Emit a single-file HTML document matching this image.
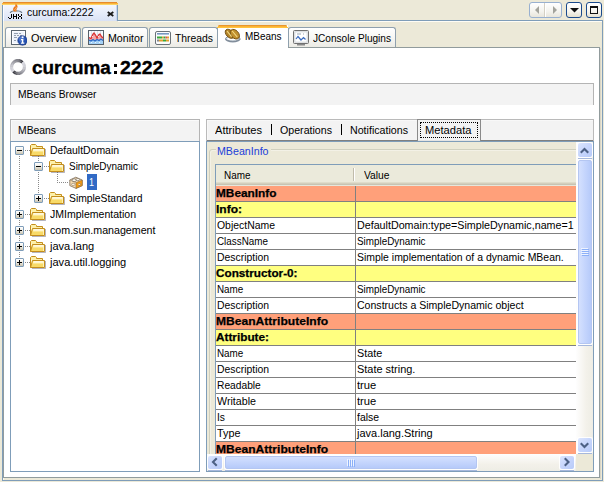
<!DOCTYPE html><html><head><meta charset="utf-8"><style>
html,body{margin:0;padding:0;width:604px;height:482px;overflow:hidden;background:#ece9d8}
body>div,#c>div{position:absolute}
.t{white-space:nowrap;line-height:13px;font-family:"Liberation Sans",sans-serif;transform-origin:0 0}
</style></head><body>
<div style="left:3px;top:5px;width:114px;height:16px;background:linear-gradient(#f4f7fd,#d9e2f5)"></div><div style="left:3px;top:5px;width:1px;height:16px;background:#fbfcff"></div><div style="left:3px;top:2px;width:114px;height:1px;background:#e68b2c"></div><div style="left:2px;top:3px;width:116px;height:1px;background:#f9b13a"></div><div style="left:2px;top:4px;width:116px;height:1px;background:#fdd566"></div><div style="left:2px;top:5px;width:1px;height:476px;background:#7f9db9"></div><div style="left:117px;top:5px;width:1px;height:16px;background:#7f9db9"></div><div style="left:117px;top:20px;width:486px;height:1px;background:#7f9db9"></div><div style="left:118px;top:21px;width:484px;height:1px;background:#fffdf5"></div><div style="left:602px;top:20px;width:1px;height:461px;background:#7f9db9"></div><div style="left:2px;top:480px;width:601px;height:1px;background:#7f9db9"></div><div style="left:3px;top:21px;width:1px;height:459px;background:#fbf8ea"></div><div style="left:4px;top:48px;width:595px;height:429px;background:#fff"></div><div style="left:3px;top:47px;width:1px;height:431px;background:#919b9c"></div><div style="left:3px;top:47px;width:597px;height:1px;background:#919b9c"></div><div style="left:599px;top:47px;width:1px;height:431px;background:#919b9c"></div><div style="left:3px;top:477px;width:597px;height:1px;background:#919b9c"></div><div style="left:600px;top:48px;width:1px;height:431px;background:#d8d5c6"></div><svg style="position:absolute;left:0;top:0" width="26" height="22" shape-rendering="crispEdges"><g shape-rendering="auto"><path d="M10.3 13 C10.8 10.2 21.2 10.2 21.7 13" fill="none" stroke="#6f7f8e" stroke-width="1.4"/><path d="M12.5 11.6 C14 10.9 18 10.9 19.5 11.6" fill="none" stroke="#c8d4de" stroke-width="0.8"/><path d="M15.5 3.6 C17.8 5 18.2 7 16.8 8.6 C16.2 9.6 16.6 10.4 16.6 11.4 L13.8 11.4 C12.6 9.8 13 8 14.4 6.8 C15.4 6 15.8 4.8 15.5 3.6Z" fill="#e8761a"/><path d="M15.6 6.6 C16.6 7.3 16.4 8.2 15.2 8.8 C14.4 9.3 14.8 10 15.6 10.3" fill="none" stroke="#ffc890" stroke-width="0.7"/></g><rect x="11" y="14" width="1" height="1" fill="#000"/><rect x="11" y="15" width="1" height="1" fill="#000"/><rect x="11" y="16" width="1" height="1" fill="#000"/><rect x="11" y="17" width="1" height="1" fill="#000"/><rect x="10" y="18" width="1" height="1" fill="#000"/><rect x="9" y="18" width="1" height="1" fill="#000"/><rect x="8" y="17" width="1" height="1" fill="#000"/><rect x="13" y="14" width="1" height="1" fill="#000"/><rect x="13" y="15" width="1" height="1" fill="#000"/><rect x="13" y="16" width="1" height="1" fill="#000"/><rect x="13" y="17" width="1" height="1" fill="#000"/><rect x="13" y="18" width="1" height="1" fill="#000"/><rect x="16" y="14" width="1" height="1" fill="#000"/><rect x="16" y="15" width="1" height="1" fill="#000"/><rect x="16" y="16" width="1" height="1" fill="#000"/><rect x="16" y="17" width="1" height="1" fill="#000"/><rect x="16" y="18" width="1" height="1" fill="#000"/><rect x="14" y="16" width="1" height="1" fill="#000"/><rect x="15" y="16" width="1" height="1" fill="#000"/><rect x="18" y="14" width="1" height="1" fill="#000"/><rect x="18" y="15" width="1" height="1" fill="#000"/><rect x="19" y="16" width="1" height="1" fill="#000"/><rect x="20" y="16" width="1" height="1" fill="#000"/><rect x="18" y="17" width="1" height="1" fill="#000"/><rect x="18" y="18" width="1" height="1" fill="#000"/><rect x="21" y="14" width="1" height="1" fill="#000"/><rect x="21" y="15" width="1" height="1" fill="#000"/><rect x="21" y="17" width="1" height="1" fill="#000"/><rect x="21" y="18" width="1" height="1" fill="#000"/></svg><div class="t" style="left:27.00px;top:6px;font-size:11px;color:#000;transform:scaleX(0.9543);">curcuma:2222</div><svg style="position:absolute;left:106px;top:10px" width="9" height="8" viewBox="0 0 9 8"><path d="M1.7 1.9L7.3 5.9M7.3 1.9L1.7 5.9" stroke="#1a1a1a" stroke-width="1.8"/></svg><div style="left:116px;top:5px;width:1px;height:16px;background:#c8d6f2"></div><div style="left:529px;top:2px;width:33px;height:16px;box-sizing:border-box;border:1px solid #98b0d0;border-radius:3px;background:linear-gradient(#ffffff,#f4f3ee 60%,#e8e6dc)"></div><div style="left:544px;top:3px;width:1px;height:14px;background:#d4d0c4"></div><div style="left:545px;top:3px;width:1px;height:14px;background:#ffffff"></div><svg style="position:absolute;left:534px;top:5px" width="26" height="10"><path d="M5 1 L1 5 L5 9Z" fill="#a3a39c"/><path d="M19 1 L23 5 L19 9Z" fill="#a3a39c"/></svg><div style="left:566px;top:2px;width:16px;height:16px;box-sizing:border-box;border:1px solid #1a4a8c;border-radius:3px;background:linear-gradient(#ffffff,#f6f5ef 60%,#e4e0d0)"></div><svg style="position:absolute;left:570px;top:8px" width="9" height="5"><path d="M0 0H9L4.5 4.5Z" fill="#111"/></svg><div style="left:586px;top:2px;width:16px;height:16px;box-sizing:border-box;border:1px solid #1a4a8c;border-radius:3px;background:linear-gradient(#ffffff,#f6f5ef 60%,#e4e0d0)"></div><div style="left:590px;top:6px;width:8px;height:8px;box-sizing:border-box;border:1px solid #111;border-top-width:2px"></div><div style="left:5px;top:27px;width:76px;height:20px;box-sizing:border-box;border:1px solid #8fa0ae;border-bottom:none;border-radius:3px 3px 0 0;background:linear-gradient(#ffffff,#f7f7f4 50%,#ecebe5)"></div><div style="left:82px;top:27px;width:66px;height:20px;box-sizing:border-box;border:1px solid #8fa0ae;border-bottom:none;border-radius:3px 3px 0 0;background:linear-gradient(#ffffff,#f7f7f4 50%,#ecebe5)"></div><div style="left:149px;top:27px;width:69px;height:20px;box-sizing:border-box;border:1px solid #8fa0ae;border-bottom:none;border-radius:3px 3px 0 0;background:linear-gradient(#ffffff,#f7f7f4 50%,#ecebe5)"></div><div style="left:288px;top:27px;width:108px;height:20px;box-sizing:border-box;border:1px solid #8fa0ae;border-bottom:none;border-radius:3px 3px 0 0;background:linear-gradient(#ffffff,#f7f7f4 50%,#ecebe5)"></div><div style="left:218px;top:25px;width:70px;height:23px;background:#fff"></div><div style="left:217px;top:28px;width:1px;height:19px;background:#8fa0ae"></div><div style="left:288px;top:28px;width:1px;height:19px;background:#8fa0ae"></div><div style="left:219px;top:25px;width:67px;height:1px;background:#e8962e"></div><div style="left:218px;top:26px;width:69px;height:1px;background:#fbb234"></div><div style="left:217px;top:27px;width:71px;height:1px;background:#ffc440"></div><div style="left:218px;top:25px;width:1px;height:1px;background:#eebc70"></div><div style="left:286px;top:25px;width:1px;height:1px;background:#eebc70"></div><div class="t" style="left:31.00px;top:32px;font-size:11px;color:#000;transform:scaleX(0.9919);">Overview</div><div class="t" style="left:108.00px;top:32px;font-size:11px;color:#000;transform:scaleX(0.9677);">Monitor</div><div class="t" style="left:175.00px;top:32px;font-size:11px;color:#000;transform:scaleX(0.9413);">Threads</div><div class="t" style="left:245.00px;top:30px;font-size:11px;color:#000;transform:scaleX(0.9041);">MBeans</div><div class="t" style="left:313.00px;top:32px;font-size:11px;color:#000;transform:scaleX(0.9179);">JConsole Plugins</div><svg style="position:absolute;left:11px;top:30px" width="16" height="16" viewBox="0 0 16 16"><rect x="0.5" y="0.5" width="14" height="14" fill="#eef3fb" stroke="#5b6670"/><rect x="1.5" y="1.5" width="12" height="12" fill="none" stroke="#ffffff" stroke-width="0.8"/><path d="M3 3.5H7M8 3.5H10M3 5.5H5M6 5.5H8M9 5.5H11M3 7.5H6M3 10.5H5" stroke="#8a96a6" stroke-width="0.9"/><circle cx="11.5" cy="10.5" r="4.7" fill="#2450b0" stroke="#1a3a86" stroke-width="0.7"/><circle cx="10.6" cy="9.2" r="2.8" fill="#6a92de" opacity="0.55"/><rect x="10.7" y="6.4" width="1.8" height="1.7" fill="#fff"/><path d="M10 9.6H12.3M11.6 9V13.2M9.9 13.1H13.3" stroke="#fff" stroke-width="1.3" fill="none"/></svg><svg style="position:absolute;left:88px;top:30px" width="16" height="16" viewBox="0 0 16 16"><rect x="0.5" y="0.5" width="15" height="14" fill="#f6f9fd" stroke="#56606a"/><path d="M3.5 1V14M6.5 1V14M9.5 1V14M12.5 1V14" stroke="#d4dce4" stroke-width="0.8"/><path d="M1 7.5 L3 8.5 L5 4 L6 3 L7.5 5 L9 8 L11 4.5 L12 4 L13.5 6.5 L15 8 L15 11 L1 11Z" fill="#f4a8a8"/><path d="M1 7.5 L3 8.5 L5 4 L6 3 L7.5 5 L9 8 L11 4.5 L12 4 L13.5 6.5 L15 8" stroke="#d83434" stroke-width="1.3" fill="none"/><path d="M1 14 L1 10 L3 11 L5 9.5 L7 11 L9 9.5 L11 10.5 L13 9 L15 10.5 L15 14Z" fill="#a6d2f6"/><path d="M1 10 L3 11 L5 9.5 L7 11 L9 9.5 L11 10.5 L13 9 L15 10.5" stroke="#2a6ac8" stroke-width="1.3" fill="none"/><path d="M3 12.5h1M7 12.5h1M11 12.5h1M4 6.5h1M10 6.5h1" stroke="#fff" stroke-width="0.8"/></svg><svg style="position:absolute;left:155px;top:31px" width="16" height="14" viewBox="0 0 16 14"><rect x="0.5" y="0.5" width="15" height="13" rx="1.5" fill="#fbfcfd" stroke="#6a7278"/><rect x="2" y="2" width="12" height="1.6" fill="#7898c0"/><rect x="2" y="5.5" width="5" height="2" fill="#3aa83a"/><rect x="7" y="5.5" width="1.5" height="2" fill="#e8a030"/><rect x="8.5" y="5.5" width="2" height="2" fill="#3aa83a"/><rect x="10.5" y="5.5" width="1.5" height="2" fill="#e05050"/><rect x="12" y="5.5" width="2" height="2" fill="#e8a030"/><rect x="2" y="8.5" width="2" height="2" fill="#888"/><rect x="4" y="8.5" width="4" height="2" fill="#e0a030"/><rect x="8" y="8.5" width="3" height="2" fill="#3aa83a"/><rect x="11" y="8.5" width="3" height="2" fill="#e0a030"/></svg><svg style="position:absolute;left:224px;top:28px" width="18" height="16" viewBox="0 0 18 16"><ellipse cx="8.8" cy="11.2" rx="7.6" ry="3.3" fill="#8a96a4"/><ellipse cx="8.8" cy="10.6" rx="7" ry="2.6" fill="#e4eaf0" stroke="#6c7886" stroke-width="0.8"/><ellipse cx="8.8" cy="10.4" rx="5" ry="1.6" fill="#ffffff"/><ellipse cx="5.6" cy="5.8" rx="3.4" ry="5.3" transform="rotate(-42 5.6 5.8)" fill="#b48428" stroke="#6e4c10" stroke-width="0.9"/><ellipse cx="10.8" cy="6.2" rx="3.8" ry="5.5" transform="rotate(-42 10.8 6.2)" fill="#c0902e" stroke="#6e4c10" stroke-width="0.9"/><path d="M3 3 L7.6 8.6 M8.2 3 L13.2 9" stroke="#f4dc88" stroke-width="1.1"/></svg><svg style="position:absolute;left:293px;top:30px" width="16" height="16" viewBox="0 0 16 16"><rect x="0.5" y="0.5" width="15" height="13" rx="1" fill="#e8e8e8" stroke="#707070"/><rect x="2" y="2" width="12" height="10" fill="#fff" stroke="#c8d0d8" stroke-width="0.6"/><path d="M4 4H8M10 4H11" stroke="#8090a0" stroke-width="0.8"/><path d="M3 9 L5 6.5 L8 10 L10.5 7.5 L12.5 9.5" stroke="#3b6cc0" stroke-width="1.2" fill="none"/><rect x="4" y="14" width="8" height="1.5" fill="#888"/></svg><svg style="position:absolute;left:10px;top:59px" width="16" height="16" viewBox="0 0 16 16"><path d="M3.554 12.604 A6.4 6.4 0 0 1 2.757 11.671" stroke="rgb(215,215,223)" stroke-width="3.1" fill="none"/><path d="M2.822 11.762 A6.4 6.4 0 0 1 2.200 10.705" stroke="rgb(212,212,220)" stroke-width="3.1" fill="none"/><path d="M2.248 10.806 A6.4 6.4 0 0 1 1.818 9.656" stroke="rgb(208,208,216)" stroke-width="3.1" fill="none"/><path d="M1.848 9.764 A6.4 6.4 0 0 1 1.624 8.558" stroke="rgb(203,203,211)" stroke-width="3.1" fill="none"/><path d="M1.635 8.669 A6.4 6.4 0 0 1 1.624 7.442" stroke="rgb(196,196,204)" stroke-width="3.1" fill="none"/><path d="M1.616 7.554 A6.4 6.4 0 0 1 1.818 6.344" stroke="rgb(189,189,197)" stroke-width="3.1" fill="none"/><path d="M1.790 6.452 A6.4 6.4 0 0 1 2.200 5.295" stroke="rgb(181,181,189)" stroke-width="3.1" fill="none"/><path d="M2.153 5.397 A6.4 6.4 0 0 1 2.757 4.329" stroke="rgb(172,172,180)" stroke-width="3.1" fill="none"/><path d="M2.694 4.421 A6.4 6.4 0 0 1 3.475 3.475" stroke="rgb(163,163,171)" stroke-width="3.1" fill="none"/><path d="M3.396 3.554 A6.4 6.4 0 0 1 4.329 2.757" stroke="rgb(153,153,161)" stroke-width="3.1" fill="none"/><path d="M4.238 2.822 A6.4 6.4 0 0 1 5.295 2.200" stroke="rgb(142,142,150)" stroke-width="3.1" fill="none"/><path d="M5.194 2.248 A6.4 6.4 0 0 1 6.344 1.818" stroke="rgb(131,131,139)" stroke-width="3.1" fill="none"/><path d="M6.236 1.848 A6.4 6.4 0 0 1 7.442 1.624" stroke="rgb(120,120,128)" stroke-width="3.1" fill="none"/><path d="M7.331 1.635 A6.4 6.4 0 0 1 8.558 1.624" stroke="rgb(108,108,116)" stroke-width="3.1" fill="none"/><path d="M8.446 1.616 A6.4 6.4 0 0 1 9.656 1.818" stroke="rgb(95,95,103)" stroke-width="3.1" fill="none"/><path d="M9.548 1.790 A6.4 6.4 0 0 1 10.705 2.200" stroke="rgb(82,82,90)" stroke-width="3.1" fill="none"/><path d="M10.603 2.153 A6.4 6.4 0 0 1 11.671 2.757" stroke="rgb(68,68,76)" stroke-width="3.1" fill="none"/><path d="M11.579 2.694 A6.4 6.4 0 0 1 12.525 3.475" stroke="rgb(55,55,63)" stroke-width="3.1" fill="none"/><path d="M12.446 3.396 A6.4 6.4 0 0 1 13.243 4.329" stroke="rgb(215,215,223)" stroke-width="3.1" fill="none"/><path d="M13.178 4.238 A6.4 6.4 0 0 1 13.800 5.295" stroke="rgb(212,212,220)" stroke-width="3.1" fill="none"/><path d="M13.752 5.194 A6.4 6.4 0 0 1 14.182 6.344" stroke="rgb(208,208,216)" stroke-width="3.1" fill="none"/><path d="M14.152 6.236 A6.4 6.4 0 0 1 14.376 7.442" stroke="rgb(203,203,211)" stroke-width="3.1" fill="none"/><path d="M14.365 7.331 A6.4 6.4 0 0 1 14.376 8.558" stroke="rgb(196,196,204)" stroke-width="3.1" fill="none"/><path d="M14.384 8.446 A6.4 6.4 0 0 1 14.182 9.656" stroke="rgb(189,189,197)" stroke-width="3.1" fill="none"/><path d="M14.210 9.548 A6.4 6.4 0 0 1 13.800 10.705" stroke="rgb(181,181,189)" stroke-width="3.1" fill="none"/><path d="M13.847 10.603 A6.4 6.4 0 0 1 13.243 11.671" stroke="rgb(172,172,180)" stroke-width="3.1" fill="none"/><path d="M13.306 11.579 A6.4 6.4 0 0 1 12.525 12.525" stroke="rgb(163,163,171)" stroke-width="3.1" fill="none"/><path d="M12.604 12.446 A6.4 6.4 0 0 1 11.671 13.243" stroke="rgb(153,153,161)" stroke-width="3.1" fill="none"/><path d="M11.762 13.178 A6.4 6.4 0 0 1 10.705 13.800" stroke="rgb(142,142,150)" stroke-width="3.1" fill="none"/><path d="M10.806 13.752 A6.4 6.4 0 0 1 9.656 14.182" stroke="rgb(131,131,139)" stroke-width="3.1" fill="none"/><path d="M9.764 14.152 A6.4 6.4 0 0 1 8.558 14.376" stroke="rgb(120,120,128)" stroke-width="3.1" fill="none"/><path d="M8.669 14.365 A6.4 6.4 0 0 1 7.442 14.376" stroke="rgb(108,108,116)" stroke-width="3.1" fill="none"/><path d="M7.554 14.384 A6.4 6.4 0 0 1 6.344 14.182" stroke="rgb(95,95,103)" stroke-width="3.1" fill="none"/><path d="M6.452 14.210 A6.4 6.4 0 0 1 5.295 13.800" stroke="rgb(82,82,90)" stroke-width="3.1" fill="none"/><path d="M5.397 13.847 A6.4 6.4 0 0 1 4.329 13.243" stroke="rgb(68,68,76)" stroke-width="3.1" fill="none"/><path d="M4.421 13.306 A6.4 6.4 0 0 1 3.475 12.525" stroke="rgb(55,55,63)" stroke-width="3.1" fill="none"/></svg><div class="t" style="left:32.00px;top:62px;font-size:18px;font-weight:bold;color:#000;transform:scaleX(1.0512);-webkit-text-stroke:0.35px #000;">curcuma</div><div style="left:114px;top:64px;width:3px;height:3px;background:#000"></div><div style="left:114px;top:71px;width:3px;height:3px;background:#000"></div><div class="t" style="left:120.00px;top:62px;font-size:18px;font-weight:bold;color:#000;transform:scaleX(1.0861);-webkit-text-stroke:0.35px #000;">2222</div><div style="left:10px;top:83px;width:584px;height:22px;box-sizing:border-box;border:1px solid #b4b4b4;border-bottom:none;background:#f3f3f3"></div><div class="t" style="left:18.00px;top:88px;font-size:11px;color:#000;transform:scaleX(0.9371);">MBeans Browser</div><div style="left:10px;top:119px;width:190px;height:22px;box-sizing:border-box;border:1px solid #b4b4b4;border-bottom:none;background:#f3f3f3"></div><div style="left:11px;top:120px;width:188px;height:1px;background:#fafafa"></div><div style="left:11px;top:120px;width:1px;height:21px;background:#fafafa"></div><div class="t" style="left:18.00px;top:124px;font-size:11px;color:#000;transform:scaleX(0.9413);">MBeans</div><div style="left:10px;top:141px;width:190px;height:331px;box-sizing:border-box;border:1px solid #7f9db9;background:#fff"></div><div style="left:206px;top:119px;width:388px;height:22px;box-sizing:border-box;border:1px solid #bababa;border-bottom:none;background:#f3f3f3"></div><div style="left:207px;top:120px;width:386px;height:1px;background:#f8f8f8"></div><div style="left:207px;top:120px;width:1px;height:20px;background:#f8f8f8"></div><div style="left:207px;top:140px;width:386px;height:1px;background:#808080"></div><div class="t" style="left:215.00px;top:124px;font-size:11px;color:#000;transform:scaleX(1.0113);">Attributes</div><div style="left:271px;top:124px;width:1px;height:11px;background:#000"></div><div class="t" style="left:280.00px;top:124px;font-size:11px;color:#000;transform:scaleX(0.9667);">Operations</div><div style="left:341px;top:124px;width:1px;height:11px;background:#000"></div><div class="t" style="left:350.00px;top:124px;font-size:11px;color:#000;transform:scaleX(0.9684);">Notifications</div><div style="left:417px;top:119px;width:64px;height:22px;box-sizing:border-box;border:1px solid #8a8a8a;border-bottom:none;background:#f3f3f3"></div><div style="left:418px;top:140px;width:62px;height:1px;background:#e4e4e4"></div><div style="left:420px;top:122px;width:58px;height:16px;box-sizing:border-box;border:1px dotted #000"></div><div class="t" style="left:425.00px;top:124px;font-size:11px;color:#000;transform:scaleX(1.0125);">Metadata</div><div style="left:206px;top:141px;width:388px;height:331px;box-sizing:border-box;border:1px solid #7f9db9;background:#ece9d8"></div><svg width="0" height="0" style="position:absolute"><defs><linearGradient id="fg" x1="0" y1="0" x2="0" y2="1"><stop offset="0" stop-color="#fff6c0"/><stop offset="1" stop-color="#f6d463"/></linearGradient></defs></svg><div style="left:19px;top:156px;width:1px;height:1px;background:#8a8a8a"></div><div style="left:19px;top:158px;width:1px;height:1px;background:#8a8a8a"></div><div style="left:19px;top:160px;width:1px;height:1px;background:#8a8a8a"></div><div style="left:19px;top:162px;width:1px;height:1px;background:#8a8a8a"></div><div style="left:19px;top:164px;width:1px;height:1px;background:#8a8a8a"></div><div style="left:19px;top:166px;width:1px;height:1px;background:#8a8a8a"></div><div style="left:19px;top:168px;width:1px;height:1px;background:#8a8a8a"></div><div style="left:19px;top:170px;width:1px;height:1px;background:#8a8a8a"></div><div style="left:19px;top:172px;width:1px;height:1px;background:#8a8a8a"></div><div style="left:19px;top:174px;width:1px;height:1px;background:#8a8a8a"></div><div style="left:19px;top:176px;width:1px;height:1px;background:#8a8a8a"></div><div style="left:19px;top:178px;width:1px;height:1px;background:#8a8a8a"></div><div style="left:19px;top:180px;width:1px;height:1px;background:#8a8a8a"></div><div style="left:19px;top:182px;width:1px;height:1px;background:#8a8a8a"></div><div style="left:19px;top:184px;width:1px;height:1px;background:#8a8a8a"></div><div style="left:19px;top:186px;width:1px;height:1px;background:#8a8a8a"></div><div style="left:19px;top:188px;width:1px;height:1px;background:#8a8a8a"></div><div style="left:19px;top:190px;width:1px;height:1px;background:#8a8a8a"></div><div style="left:19px;top:192px;width:1px;height:1px;background:#8a8a8a"></div><div style="left:19px;top:194px;width:1px;height:1px;background:#8a8a8a"></div><div style="left:19px;top:196px;width:1px;height:1px;background:#8a8a8a"></div><div style="left:19px;top:198px;width:1px;height:1px;background:#8a8a8a"></div><div style="left:19px;top:200px;width:1px;height:1px;background:#8a8a8a"></div><div style="left:19px;top:202px;width:1px;height:1px;background:#8a8a8a"></div><div style="left:19px;top:204px;width:1px;height:1px;background:#8a8a8a"></div><div style="left:19px;top:206px;width:1px;height:1px;background:#8a8a8a"></div><div style="left:19px;top:208px;width:1px;height:1px;background:#8a8a8a"></div><div style="left:19px;top:220px;width:1px;height:1px;background:#8a8a8a"></div><div style="left:19px;top:222px;width:1px;height:1px;background:#8a8a8a"></div><div style="left:19px;top:224px;width:1px;height:1px;background:#8a8a8a"></div><div style="left:19px;top:226px;width:1px;height:1px;background:#8a8a8a"></div><div style="left:19px;top:228px;width:1px;height:1px;background:#8a8a8a"></div><div style="left:19px;top:230px;width:1px;height:1px;background:#8a8a8a"></div><div style="left:19px;top:232px;width:1px;height:1px;background:#8a8a8a"></div><div style="left:19px;top:234px;width:1px;height:1px;background:#8a8a8a"></div><div style="left:19px;top:236px;width:1px;height:1px;background:#8a8a8a"></div><div style="left:19px;top:238px;width:1px;height:1px;background:#8a8a8a"></div><div style="left:19px;top:240px;width:1px;height:1px;background:#8a8a8a"></div><div style="left:19px;top:242px;width:1px;height:1px;background:#8a8a8a"></div><div style="left:19px;top:244px;width:1px;height:1px;background:#8a8a8a"></div><div style="left:19px;top:246px;width:1px;height:1px;background:#8a8a8a"></div><div style="left:19px;top:248px;width:1px;height:1px;background:#8a8a8a"></div><div style="left:19px;top:250px;width:1px;height:1px;background:#8a8a8a"></div><div style="left:19px;top:252px;width:1px;height:1px;background:#8a8a8a"></div><div style="left:19px;top:254px;width:1px;height:1px;background:#8a8a8a"></div><div style="left:19px;top:256px;width:1px;height:1px;background:#8a8a8a"></div><div style="left:38px;top:156px;width:1px;height:1px;background:#8a8a8a"></div><div style="left:38px;top:158px;width:1px;height:1px;background:#8a8a8a"></div><div style="left:38px;top:160px;width:1px;height:1px;background:#8a8a8a"></div><div style="left:38px;top:162px;width:1px;height:1px;background:#8a8a8a"></div><div style="left:38px;top:164px;width:1px;height:1px;background:#8a8a8a"></div><div style="left:38px;top:166px;width:1px;height:1px;background:#8a8a8a"></div><div style="left:38px;top:168px;width:1px;height:1px;background:#8a8a8a"></div><div style="left:38px;top:170px;width:1px;height:1px;background:#8a8a8a"></div><div style="left:38px;top:172px;width:1px;height:1px;background:#8a8a8a"></div><div style="left:38px;top:174px;width:1px;height:1px;background:#8a8a8a"></div><div style="left:38px;top:176px;width:1px;height:1px;background:#8a8a8a"></div><div style="left:38px;top:178px;width:1px;height:1px;background:#8a8a8a"></div><div style="left:38px;top:180px;width:1px;height:1px;background:#8a8a8a"></div><div style="left:38px;top:182px;width:1px;height:1px;background:#8a8a8a"></div><div style="left:38px;top:184px;width:1px;height:1px;background:#8a8a8a"></div><div style="left:38px;top:186px;width:1px;height:1px;background:#8a8a8a"></div><div style="left:38px;top:188px;width:1px;height:1px;background:#8a8a8a"></div><div style="left:38px;top:190px;width:1px;height:1px;background:#8a8a8a"></div><div style="left:38px;top:192px;width:1px;height:1px;background:#8a8a8a"></div><div style="left:57px;top:172px;width:1px;height:1px;background:#8a8a8a"></div><div style="left:57px;top:174px;width:1px;height:1px;background:#8a8a8a"></div><div style="left:57px;top:176px;width:1px;height:1px;background:#8a8a8a"></div><div style="left:57px;top:178px;width:1px;height:1px;background:#8a8a8a"></div><div style="left:57px;top:180px;width:1px;height:1px;background:#8a8a8a"></div><div style="left:15px;top:146px;width:9px;height:9px;box-sizing:border-box;border:1px solid #7f9db9;border-radius:1px;background:linear-gradient(#ffffff,#f0eee6 45%,#c9c3b0)"></div><div style="left:17px;top:150px;width:5px;height:1px;background:#000"></div><div style="left:25px;top:150px;width:1px;height:1px;background:#8a8a8a"></div><div style="left:27px;top:150px;width:1px;height:1px;background:#8a8a8a"></div><div style="left:29px;top:150px;width:1px;height:1px;background:#8a8a8a"></div><svg style="position:absolute;left:30px;top:143px" width="16" height="14" viewBox="0 0 16 14"><path d="M0.5 12.5V2.5L1.5 1.5H5.5L6.5 2.5V3.5H12.5V5.5" fill="#fdf0a8" stroke="#c48e1c"/><path d="M1.5 4.5V11" stroke="#fffbe0" stroke-width="1"/><path d="M2.5 5.5H14.5V12.5H0.5Z" fill="#f8da68" stroke="#c48e1c" stroke-linejoin="round"/><path d="M3 6.5H14V8.5H3Z" fill="#fff3b8"/><path d="M3.5 6.8H13.5" stroke="#ffffff" stroke-width="1"/><path d="M15.5 6V13.5H2" fill="none" stroke="#5a5a70" stroke-opacity="0.45"/><path d="M13.5 6.5V12" stroke="#fff6c8" stroke-width="0.8"/></svg><div class="t" style="left:50.00px;top:144px;font-size:11px;color:#000;transform:scaleX(0.9483);">DefaultDomain</div><div style="left:34px;top:162px;width:9px;height:9px;box-sizing:border-box;border:1px solid #7f9db9;border-radius:1px;background:linear-gradient(#ffffff,#f0eee6 45%,#c9c3b0)"></div><div style="left:36px;top:166px;width:5px;height:1px;background:#000"></div><div style="left:44px;top:166px;width:1px;height:1px;background:#8a8a8a"></div><div style="left:46px;top:166px;width:1px;height:1px;background:#8a8a8a"></div><div style="left:48px;top:166px;width:1px;height:1px;background:#8a8a8a"></div><svg style="position:absolute;left:49px;top:159px" width="16" height="14" viewBox="0 0 16 14"><path d="M0.5 12.5V2.5L1.5 1.5H5.5L6.5 2.5V3.5H12.5V5.5" fill="#fdf0a8" stroke="#c48e1c"/><path d="M1.5 4.5V11" stroke="#fffbe0" stroke-width="1"/><path d="M2.5 5.5H14.5V12.5H0.5Z" fill="#f8da68" stroke="#c48e1c" stroke-linejoin="round"/><path d="M3 6.5H14V8.5H3Z" fill="#fff3b8"/><path d="M3.5 6.8H13.5" stroke="#ffffff" stroke-width="1"/><path d="M15.5 6V13.5H2" fill="none" stroke="#5a5a70" stroke-opacity="0.45"/><path d="M13.5 6.5V12" stroke="#fff6c8" stroke-width="0.8"/></svg><div class="t" style="left:69.00px;top:160px;font-size:11px;color:#000;transform:scaleX(0.9032);">SimpleDynamic</div><div style="left:57px;top:182px;width:1px;height:1px;background:#8a8a8a"></div><div style="left:59px;top:182px;width:1px;height:1px;background:#8a8a8a"></div><div style="left:61px;top:182px;width:1px;height:1px;background:#8a8a8a"></div><div style="left:63px;top:182px;width:1px;height:1px;background:#8a8a8a"></div><div style="left:65px;top:182px;width:1px;height:1px;background:#8a8a8a"></div><div style="left:67px;top:182px;width:1px;height:1px;background:#8a8a8a"></div><svg style="position:absolute;left:69px;top:176px" width="14" height="13" viewBox="0 0 14 13"><path d="M0.8 4 L6.8 1.2 L13.2 4 L13.2 9.6 L7 12.4 L0.8 9.6Z" fill="#f6dbb0" stroke="#7c6c5a" stroke-width="0.8"/><path d="M7 6.8 L13.2 4 L13.2 9.6 L7 12.4Z" fill="#f59c10" stroke="#8a6a40" stroke-width="0.6"/><path d="M0.8 4 L7 6.8" fill="none" stroke="#a89070" stroke-width="0.6"/><ellipse cx="5.2" cy="4.2" rx="2.2" ry="1.4" fill="#fffaf0" stroke="#6c6050" stroke-width="0.7"/><ellipse cx="8.8" cy="3.6" rx="1.8" ry="1.1" fill="#fffaf0" stroke="#6c6050" stroke-width="0.6"/><path d="M9.5 7.8 C10.8 7.2 12 7.4 11.6 8.6 C11 9.6 9.6 10 9.3 9" fill="#fbe6c0" stroke="#7c6040" stroke-width="0.6"/><ellipse cx="4.2" cy="8.4" rx="1.8" ry="1.1" fill="#fff6e6" stroke="#8c7860" stroke-width="0.6"/></svg><div style="left:87px;top:174px;width:10px;height:16px;background:#316ac5"></div><div class="t" style="left:89.00px;top:176px;font-size:11px;color:#fff;transform:scaleX(0.8190);">1</div><div style="left:34px;top:194px;width:9px;height:9px;box-sizing:border-box;border:1px solid #7f9db9;border-radius:1px;background:linear-gradient(#ffffff,#f0eee6 45%,#c9c3b0)"></div><div style="left:36px;top:198px;width:5px;height:1px;background:#000"></div><div style="left:38px;top:196px;width:1px;height:5px;background:#000"></div><div style="left:44px;top:198px;width:1px;height:1px;background:#8a8a8a"></div><div style="left:46px;top:198px;width:1px;height:1px;background:#8a8a8a"></div><div style="left:48px;top:198px;width:1px;height:1px;background:#8a8a8a"></div><svg style="position:absolute;left:49px;top:191px" width="16" height="14" viewBox="0 0 16 14"><path d="M0.5 12.5V2.5L1.5 1.5H5.5L6.5 2.5V3.5H12.5V5.5" fill="#fdf0a8" stroke="#c48e1c"/><path d="M1.5 4.5V11" stroke="#fffbe0" stroke-width="1"/><path d="M2.5 5.5H14.5V12.5H0.5Z" fill="#f8da68" stroke="#c48e1c" stroke-linejoin="round"/><path d="M3 6.5H14V8.5H3Z" fill="#fff3b8"/><path d="M3.5 6.8H13.5" stroke="#ffffff" stroke-width="1"/><path d="M15.5 6V13.5H2" fill="none" stroke="#5a5a70" stroke-opacity="0.45"/><path d="M13.5 6.5V12" stroke="#fff6c8" stroke-width="0.8"/></svg><div class="t" style="left:69.00px;top:192px;font-size:11px;color:#000;transform:scaleX(0.9391);">SimpleStandard</div><div style="left:15px;top:210px;width:9px;height:9px;box-sizing:border-box;border:1px solid #7f9db9;border-radius:1px;background:linear-gradient(#ffffff,#f0eee6 45%,#c9c3b0)"></div><div style="left:17px;top:214px;width:5px;height:1px;background:#000"></div><div style="left:19px;top:212px;width:1px;height:5px;background:#000"></div><div style="left:25px;top:214px;width:1px;height:1px;background:#8a8a8a"></div><div style="left:27px;top:214px;width:1px;height:1px;background:#8a8a8a"></div><div style="left:29px;top:214px;width:1px;height:1px;background:#8a8a8a"></div><svg style="position:absolute;left:30px;top:207px" width="16" height="14" viewBox="0 0 16 14"><path d="M0.5 12.5V2.5L1.5 1.5H5.5L6.5 2.5V3.5H12.5V5.5" fill="#fdf0a8" stroke="#c48e1c"/><path d="M1.5 4.5V11" stroke="#fffbe0" stroke-width="1"/><path d="M2.5 5.5H14.5V12.5H0.5Z" fill="#f8da68" stroke="#c48e1c" stroke-linejoin="round"/><path d="M3 6.5H14V8.5H3Z" fill="#fff3b8"/><path d="M3.5 6.8H13.5" stroke="#ffffff" stroke-width="1"/><path d="M15.5 6V13.5H2" fill="none" stroke="#5a5a70" stroke-opacity="0.45"/><path d="M13.5 6.5V12" stroke="#fff6c8" stroke-width="0.8"/></svg><div class="t" style="left:50.00px;top:208px;font-size:11px;color:#000;transform:scaleX(0.9569);">JMImplementation</div><div style="left:15px;top:226px;width:9px;height:9px;box-sizing:border-box;border:1px solid #7f9db9;border-radius:1px;background:linear-gradient(#ffffff,#f0eee6 45%,#c9c3b0)"></div><div style="left:17px;top:230px;width:5px;height:1px;background:#000"></div><div style="left:19px;top:228px;width:1px;height:5px;background:#000"></div><div style="left:25px;top:230px;width:1px;height:1px;background:#8a8a8a"></div><div style="left:27px;top:230px;width:1px;height:1px;background:#8a8a8a"></div><div style="left:29px;top:230px;width:1px;height:1px;background:#8a8a8a"></div><svg style="position:absolute;left:30px;top:223px" width="16" height="14" viewBox="0 0 16 14"><path d="M0.5 12.5V2.5L1.5 1.5H5.5L6.5 2.5V3.5H12.5V5.5" fill="#fdf0a8" stroke="#c48e1c"/><path d="M1.5 4.5V11" stroke="#fffbe0" stroke-width="1"/><path d="M2.5 5.5H14.5V12.5H0.5Z" fill="#f8da68" stroke="#c48e1c" stroke-linejoin="round"/><path d="M3 6.5H14V8.5H3Z" fill="#fff3b8"/><path d="M3.5 6.8H13.5" stroke="#ffffff" stroke-width="1"/><path d="M15.5 6V13.5H2" fill="none" stroke="#5a5a70" stroke-opacity="0.45"/><path d="M13.5 6.5V12" stroke="#fff6c8" stroke-width="0.8"/></svg><div class="t" style="left:50.00px;top:224px;font-size:11px;color:#000;transform:scaleX(0.9693);">com.sun.management</div><div style="left:15px;top:242px;width:9px;height:9px;box-sizing:border-box;border:1px solid #7f9db9;border-radius:1px;background:linear-gradient(#ffffff,#f0eee6 45%,#c9c3b0)"></div><div style="left:17px;top:246px;width:5px;height:1px;background:#000"></div><div style="left:19px;top:244px;width:1px;height:5px;background:#000"></div><div style="left:25px;top:246px;width:1px;height:1px;background:#8a8a8a"></div><div style="left:27px;top:246px;width:1px;height:1px;background:#8a8a8a"></div><div style="left:29px;top:246px;width:1px;height:1px;background:#8a8a8a"></div><svg style="position:absolute;left:30px;top:239px" width="16" height="14" viewBox="0 0 16 14"><path d="M0.5 12.5V2.5L1.5 1.5H5.5L6.5 2.5V3.5H12.5V5.5" fill="#fdf0a8" stroke="#c48e1c"/><path d="M1.5 4.5V11" stroke="#fffbe0" stroke-width="1"/><path d="M2.5 5.5H14.5V12.5H0.5Z" fill="#f8da68" stroke="#c48e1c" stroke-linejoin="round"/><path d="M3 6.5H14V8.5H3Z" fill="#fff3b8"/><path d="M3.5 6.8H13.5" stroke="#ffffff" stroke-width="1"/><path d="M15.5 6V13.5H2" fill="none" stroke="#5a5a70" stroke-opacity="0.45"/><path d="M13.5 6.5V12" stroke="#fff6c8" stroke-width="0.8"/></svg><div class="t" style="left:50.28px;top:240px;font-size:11px;color:#000;transform:scaleX(1.0038);">java.lang</div><div style="left:15px;top:258px;width:9px;height:9px;box-sizing:border-box;border:1px solid #7f9db9;border-radius:1px;background:linear-gradient(#ffffff,#f0eee6 45%,#c9c3b0)"></div><div style="left:17px;top:262px;width:5px;height:1px;background:#000"></div><div style="left:19px;top:260px;width:1px;height:5px;background:#000"></div><div style="left:25px;top:262px;width:1px;height:1px;background:#8a8a8a"></div><div style="left:27px;top:262px;width:1px;height:1px;background:#8a8a8a"></div><div style="left:29px;top:262px;width:1px;height:1px;background:#8a8a8a"></div><svg style="position:absolute;left:30px;top:255px" width="16" height="14" viewBox="0 0 16 14"><path d="M0.5 12.5V2.5L1.5 1.5H5.5L6.5 2.5V3.5H12.5V5.5" fill="#fdf0a8" stroke="#c48e1c"/><path d="M1.5 4.5V11" stroke="#fffbe0" stroke-width="1"/><path d="M2.5 5.5H14.5V12.5H0.5Z" fill="#f8da68" stroke="#c48e1c" stroke-linejoin="round"/><path d="M3 6.5H14V8.5H3Z" fill="#fff3b8"/><path d="M3.5 6.8H13.5" stroke="#ffffff" stroke-width="1"/><path d="M15.5 6V13.5H2" fill="none" stroke="#5a5a70" stroke-opacity="0.45"/><path d="M13.5 6.5V12" stroke="#fff6c8" stroke-width="0.8"/></svg><div class="t" style="left:50.28px;top:256px;font-size:11px;color:#000;transform:scaleX(1.0050);">java.util.logging</div><div id="c" style="left:207px;top:142px;width:369px;height:312px;overflow:hidden;position:absolute"><div style="left:2px;top:7px;width:492px;height:452px;box-sizing:border-box;border:1px solid #d0d0bf;border-radius:3px;box-shadow:inset 1px 1px 0 #f3f1e6"></div><div style="left:9px;top:4px;width:55px;height:8px;background:#ece9d8"></div><div class="t" style="left:10.00px;top:3px;font-size:11px;color:#2240d8;transform:scaleX(0.9683);">MBeanInfo</div><div style="left:8px;top:22px;width:486px;height:437px;box-sizing:border-box;border:1px solid #7f9db9;background:#fff"></div><div style="left:9px;top:23px;width:485px;height:17px;background:#ebeadb"></div><div style="left:9px;top:40px;width:485px;height:1px;background:#dfdccb"></div><div style="left:9px;top:41px;width:485px;height:1px;background:#d3cfbd"></div><div style="left:9px;top:42px;width:485px;height:1px;background:#c8c4b3"></div><div style="left:9px;top:43px;width:485px;height:1px;background:#e6e7dc"></div><div style="left:146px;top:26px;width:1px;height:13px;background:#c0bcab"></div><div style="left:147px;top:26px;width:1px;height:13px;background:#fff"></div><div class="t" style="left:17.00px;top:27px;font-size:11px;color:#000;transform:scaleX(0.9023);">Name</div><div class="t" style="left:157.00px;top:27px;font-size:11px;color:#000;transform:scaleX(0.9329);">Value</div><div style="left:9px;top:44px;width:485px;height:15px;background:#ffa07a"></div><div style="left:9px;top:59px;width:485px;height:1px;background:#808080"></div><div class="t" style="left:9.00px;top:45px;font-size:11px;font-weight:bold;color:#000;transform:scaleX(1.0763);-webkit-text-stroke:0.25px #000;">MBeanInfo</div><div style="left:9px;top:60px;width:485px;height:15px;background:#ffff80"></div><div style="left:9px;top:75px;width:485px;height:1px;background:#808080"></div><div class="t" style="left:9.00px;top:61px;font-size:11px;font-weight:bold;color:#000;transform:scaleX(1.0917);-webkit-text-stroke:0.25px #000;">Info:</div><div style="left:9px;top:91px;width:485px;height:1px;background:#808080"></div><div class="t" style="left:10.00px;top:77px;font-size:11px;color:#000;transform:scaleX(0.9483);">ObjectName</div><div class="t" style="left:150.00px;top:77px;font-size:11px;color:#000;transform:scaleX(0.9736);">DefaultDomain:type=SimpleDynamic,name=1</div><div style="left:9px;top:107px;width:485px;height:1px;background:#808080"></div><div class="t" style="left:10.00px;top:93px;font-size:11px;color:#000;transform:scaleX(0.8968);">ClassName</div><div class="t" style="left:150.00px;top:93px;font-size:11px;color:#000;transform:scaleX(0.8967);">SimpleDynamic</div><div style="left:9px;top:123px;width:485px;height:1px;background:#808080"></div><div class="t" style="left:10.00px;top:109px;font-size:11px;color:#000;transform:scaleX(0.9455);">Description</div><div class="t" style="left:150.00px;top:109px;font-size:11px;color:#000;transform:scaleX(0.9495);">Simple implementation of a dynamic MBean.</div><div style="left:9px;top:124px;width:485px;height:15px;background:#ffff80"></div><div style="left:9px;top:139px;width:485px;height:1px;background:#808080"></div><div class="t" style="left:9.00px;top:125px;font-size:11px;font-weight:bold;color:#000;transform:scaleX(1.0668);-webkit-text-stroke:0.25px #000;">Constructor-0:</div><div style="left:9px;top:155px;width:485px;height:1px;background:#808080"></div><div class="t" style="left:10.00px;top:141px;font-size:11px;color:#000;transform:scaleX(0.8955);">Name</div><div class="t" style="left:150.00px;top:141px;font-size:11px;color:#000;transform:scaleX(0.8967);">SimpleDynamic</div><div style="left:9px;top:171px;width:485px;height:1px;background:#808080"></div><div class="t" style="left:10.00px;top:157px;font-size:11px;color:#000;transform:scaleX(0.9455);">Description</div><div class="t" style="left:150.00px;top:157px;font-size:11px;color:#000;transform:scaleX(0.9595);">Constructs a SimpleDynamic object</div><div style="left:9px;top:172px;width:485px;height:15px;background:#ffa07a"></div><div style="left:9px;top:187px;width:485px;height:1px;background:#808080"></div><div class="t" style="left:9.00px;top:173px;font-size:11px;font-weight:bold;color:#000;transform:scaleX(1.0978);-webkit-text-stroke:0.25px #000;">MBeanAttributeInfo</div><div style="left:9px;top:188px;width:485px;height:15px;background:#ffff80"></div><div style="left:9px;top:203px;width:485px;height:1px;background:#808080"></div><div class="t" style="left:9.00px;top:189px;font-size:11px;font-weight:bold;color:#000;transform:scaleX(1.0707);-webkit-text-stroke:0.25px #000;">Attribute:</div><div style="left:9px;top:219px;width:485px;height:1px;background:#808080"></div><div class="t" style="left:10.00px;top:205px;font-size:11px;color:#000;transform:scaleX(0.8955);">Name</div><div class="t" style="left:150.00px;top:205px;font-size:11px;color:#000;transform:scaleX(0.9811);">State</div><div style="left:9px;top:235px;width:485px;height:1px;background:#808080"></div><div class="t" style="left:10.00px;top:221px;font-size:11px;color:#000;transform:scaleX(0.9455);">Description</div><div class="t" style="left:150.00px;top:221px;font-size:11px;color:#000;transform:scaleX(0.9951);">State string.</div><div style="left:9px;top:251px;width:485px;height:1px;background:#808080"></div><div class="t" style="left:10.00px;top:237px;font-size:11px;color:#000;transform:scaleX(0.9303);">Readable</div><div class="t" style="left:150.00px;top:237px;font-size:11px;color:#000;transform:scaleX(1.0171);">true</div><div style="left:9px;top:267px;width:485px;height:1px;background:#808080"></div><div class="t" style="left:10.00px;top:253px;font-size:11px;color:#000;transform:scaleX(0.9714);">Writable</div><div class="t" style="left:150.00px;top:253px;font-size:11px;color:#000;transform:scaleX(1.0171);">true</div><div style="left:9px;top:283px;width:485px;height:1px;background:#808080"></div><div class="t" style="left:10.00px;top:269px;font-size:11px;color:#000;transform:scaleX(0.9324);">Is</div><div class="t" style="left:150.00px;top:269px;font-size:11px;color:#000;transform:scaleX(0.9479);">false</div><div style="left:9px;top:299px;width:485px;height:1px;background:#808080"></div><div class="t" style="left:10.00px;top:285px;font-size:11px;color:#000;transform:scaleX(0.9845);">Type</div><div class="t" style="left:150.27px;top:285px;font-size:11px;color:#000;transform:scaleX(0.9984);">java.lang.String</div><div style="left:9px;top:300px;width:485px;height:15px;background:#ffa07a"></div><div style="left:9px;top:315px;width:485px;height:1px;background:#808080"></div><div class="t" style="left:9.00px;top:301px;font-size:11px;font-weight:bold;color:#000;transform:scaleX(1.0978);-webkit-text-stroke:0.25px #000;">MBeanAttributeInfo</div><div style="left:148px;top:44px;width:1px;height:415px;background:#808080"></div></div><div style="left:576px;top:142px;width:17px;height:312px;background:linear-gradient(90deg,#fefefe,#f3f1ea 60%,#eeede5)"></div><div style="left:207px;top:454px;width:369px;height:17px;background:linear-gradient(#fefefe,#f3f1ea 60%,#eeede5)"></div><div style="left:576px;top:454px;width:17px;height:17px;background:#ece9d8"></div><div style="left:577px;top:142px;width:16px;height:16px;background:#fff;border-radius:2px;opacity:0.9"></div><div style="left:578px;top:143px;width:14px;height:14px;border-radius:2px;background:linear-gradient(135deg,#dce6fe,#c6d5fc 50%,#b8cbf9)"></div><div style="left:578px;top:158px;width:14px;height:1px;background:#a6b8dc"></div><svg style="position:absolute;left:0;top:0" width="604" height="482"><path d="M581.5 152 L584.5 149 L587.5 152" fill="none" stroke="#4d6185" stroke-width="2.1" stroke-linecap="square" stroke-linejoin="miter"/></svg><div style="left:577px;top:159px;width:16px;height:186px;background:#fff;border-radius:2px;opacity:0.9"></div><div style="left:578px;top:160px;width:14px;height:184px;box-sizing:border-box;border:1px solid #b4c6f2;border-radius:2px;background:linear-gradient(90deg,#d4e0fe,#c6d6fd 45%,#b6cafa)"></div><div style="left:578px;top:345px;width:14px;height:1px;background:#a6b8dc"></div><div style="left:581px;top:248px;width:7px;height:1px;background:#eef3ff"></div><div style="left:582px;top:249px;width:7px;height:1px;background:#8cb0f8"></div><div style="left:581px;top:250px;width:7px;height:1px;background:#eef3ff"></div><div style="left:582px;top:251px;width:7px;height:1px;background:#8cb0f8"></div><div style="left:581px;top:252px;width:7px;height:1px;background:#eef3ff"></div><div style="left:582px;top:253px;width:7px;height:1px;background:#8cb0f8"></div><div style="left:581px;top:254px;width:7px;height:1px;background:#eef3ff"></div><div style="left:582px;top:255px;width:7px;height:1px;background:#8cb0f8"></div><div style="left:577px;top:437px;width:16px;height:16px;background:#fff;border-radius:2px;opacity:0.9"></div><div style="left:578px;top:438px;width:14px;height:14px;border-radius:2px;background:linear-gradient(135deg,#dce6fe,#c6d5fc 50%,#b8cbf9)"></div><div style="left:578px;top:453px;width:14px;height:1px;background:#a6b8dc"></div><svg style="position:absolute;left:0;top:0" width="604" height="482"><path d="M581.5 444 L584.5 447 L587.5 444" fill="none" stroke="#4d6185" stroke-width="2.1" stroke-linecap="square" stroke-linejoin="miter"/></svg><div style="left:207px;top:455px;width:16px;height:15px;background:#fff;border-radius:2px;opacity:0.9"></div><div style="left:208px;top:456px;width:14px;height:13px;border-radius:2px;background:linear-gradient(135deg,#dce6fe,#c6d5fc 50%,#b8cbf9)"></div><div style="left:208px;top:470px;width:14px;height:1px;background:#a6b8dc"></div><svg style="position:absolute;left:0;top:0" width="604" height="482"><path d="M216 459 L213 462 L216 465" fill="none" stroke="#4d6185" stroke-width="2.1" stroke-linecap="square" stroke-linejoin="miter"/></svg><div style="left:224px;top:455px;width:254px;height:15px;background:#fff;border-radius:2px;opacity:0.9"></div><div style="left:225px;top:456px;width:252px;height:13px;box-sizing:border-box;border:1px solid #b4c6f2;border-radius:2px;background:linear-gradient(#d4e0fe,#c6d6fd 45%,#b6cafa)"></div><div style="left:225px;top:470px;width:252px;height:1px;background:#a6b8dc"></div><div style="left:347px;top:459px;width:1px;height:7px;background:#eef3ff"></div><div style="left:348px;top:460px;width:1px;height:7px;background:#8cb0f8"></div><div style="left:349px;top:459px;width:1px;height:7px;background:#eef3ff"></div><div style="left:350px;top:460px;width:1px;height:7px;background:#8cb0f8"></div><div style="left:351px;top:459px;width:1px;height:7px;background:#eef3ff"></div><div style="left:352px;top:460px;width:1px;height:7px;background:#8cb0f8"></div><div style="left:353px;top:459px;width:1px;height:7px;background:#eef3ff"></div><div style="left:354px;top:460px;width:1px;height:7px;background:#8cb0f8"></div><div style="left:559px;top:455px;width:16px;height:15px;background:#fff;border-radius:2px;opacity:0.9"></div><div style="left:560px;top:456px;width:14px;height:13px;border-radius:2px;background:linear-gradient(135deg,#dce6fe,#c6d5fc 50%,#b8cbf9)"></div><div style="left:560px;top:470px;width:14px;height:1px;background:#a6b8dc"></div><svg style="position:absolute;left:0;top:0" width="604" height="482"><path d="M565.5 459 L568.5 462 L565.5 465" fill="none" stroke="#4d6185" stroke-width="2.1" stroke-linecap="square" stroke-linejoin="miter"/></svg>
</body></html>
